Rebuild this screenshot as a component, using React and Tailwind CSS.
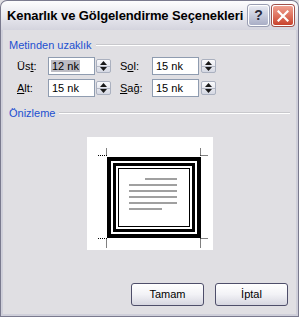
import React from "react";

function Spinner() {
  return (
    <div className="w-[15px] h-[14px] flex flex-col rounded-[2px] border border-[#aab0bf] bg-gradient-to-b from-[#fafafc] to-[#d5d8e3] overflow-hidden">
      <div className="flex-1 flex items-center justify-center border-b border-[#b4b8c4]">
        <svg width="7" height="4" viewBox="0 0 7 4"><path d="M0 4 L3.5 0 L7 4 Z" fill="#1a1a1a" /></svg>
      </div>
      <div className="flex-1 flex items-center justify-center">
        <svg width="7" height="4" viewBox="0 0 7 4"><path d="M0 0 L3.5 4 L7 0 Z" fill="#1a1a1a" /></svg>
      </div>
    </div>
  );
}

function Field({ value, selected }) {
  return (
    <div className="w-[47px] h-[18px] shrink-0 flex items-center border border-[#8f9cb0] bg-white pl-[2px]">
      {selected ? (
        <span className="bg-[#bcbcc4] px-[1px] leading-[12px]">{value}</span>
      ) : (
        <span className="px-[1px] leading-[12px]">{value}</span>
      )}
    </div>
  );
}

function GroupHeader({ children, mt }) {
  return (
    <div className={`flex items-center h-[14px] pl-[6px] pr-[6px] ${mt}`}>
      <span className="text-[#1d4fd0] whitespace-nowrap">{children}</span>
      <div className="flex-1 ml-[4px] h-[2px] border-t border-[#c8c8cc] border-b border-b-white" />
    </div>
  );
}

export default function App() {
  const marks = [
    { x: 20, y: 18.5, hx: -9, vy: -8 },
    { x: 113.5, y: 18.5, hx: 8, vy: -8 },
    { x: 20, y: 101.5, hx: -9, vy: 9 },
    { x: 113.5, y: 101.5, hx: 8, vy: 9 },
  ];
  return (
    <div className="w-[299px] h-[317px] flex flex-col bg-[#e0dfe3] overflow-hidden text-[11px] text-black font-['Liberation_Sans','Noto_Sans',sans-serif]">
      {/* Title bar */}
      <div className="h-[30px] shrink-0 flex items-center pl-[6px] pr-[4px] rounded-t-[7px] border border-b-0 border-[#7a7a8e] bg-gradient-to-b from-[#fdfdfe] via-[#e9e9ef] to-[#d4d4de]">
        <span className="flex-1 min-w-0 overflow-hidden text-[13px] font-bold text-black whitespace-nowrap tracking-[-0.1px]">
          Kenarlık ve Gölgelendirme Seçenekleri
        </span>
        <div className="shrink-0 w-[21px] h-[21px] rounded-[3px] border border-white bg-gradient-to-b from-[#e8eaf2] to-[#a9aec6] shadow-[0_0_0_1px_#9a9eb2] flex items-center justify-center text-[14px] font-bold text-[#2a2a3a]">
          ?
        </div>
        <div className="shrink-0 ml-[3px] w-[22px] h-[21px] rounded-[3px] border border-white bg-gradient-to-b from-[#f0a090] to-[#c8402c] shadow-[0_0_0_1px_#a0504a] flex items-center justify-center">
          <svg width="12" height="12" viewBox="0 0 12 12">
            <path d="M1.5 1.5 L10.5 10.5 M10.5 1.5 L1.5 10.5" stroke="#fff" strokeWidth="2.2" strokeLinecap="square" />
          </svg>
        </div>
      </div>

      {/* Body */}
      <div className="flex-1 flex flex-col border-x border-b border-[#7a7a8e]">
        <div className="flex-1 flex flex-col border-x-2 border-b-2 border-[#cfcfda]">
          <GroupHeader mt="mt-[8px]">Metinden uzaklık</GroupHeader>

          <div className="mt-[5px] flex items-center h-[18px] pl-[14px]">
            <span className="w-[31px] shrink-0">Üs<span className="underline">t</span>:</span>
            <Field value="12 nk" selected />
            <div className="ml-[1px] shrink-0"><Spinner /></div>
            <span className="ml-[9px] w-[32px] shrink-0">S<span className="underline">o</span>l:</span>
            <Field value="15 nk" />
            <div className="ml-[2px] shrink-0"><Spinner /></div>
          </div>
          <div className="mt-[4px] flex items-center h-[18px] pl-[14px]">
            <span className="w-[31px] shrink-0"><span className="underline">A</span>lt:</span>
            <Field value="15 nk" />
            <div className="ml-[1px] shrink-0"><Spinner /></div>
            <span className="ml-[9px] w-[32px] shrink-0"><span className="underline">S</span>ağ:</span>
            <Field value="15 nk" />
            <div className="ml-[2px] shrink-0"><Spinner /></div>
          </div>

          <GroupHeader mt="mt-[9px]">Önizleme</GroupHeader>

          <div className="mt-[17px] mx-auto w-[126px] h-[113px] bg-white">
            <svg width="126" height="113" viewBox="0 0 126 113">
              <rect x="20" y="20" width="94" height="81" fill="#000" />
              <rect x="24" y="24" width="86" height="73" fill="#fff" />
              <rect x="26" y="26" width="82" height="69" fill="#000" />
              <rect x="29" y="29" width="76" height="63" fill="#fff" />
              <rect x="31" y="31" width="72" height="59" fill="#000" />
              <rect x="32" y="32" width="70" height="57" fill="#fff" />
              <rect x="58" y="41" width="32" height="2" fill="#a0a0a0" />
              <rect x="42" y="47" width="48" height="2" fill="#a0a0a0" />
              <rect x="42" y="53" width="48" height="2" fill="#a0a0a0" />
              <rect x="42" y="59" width="48" height="2" fill="#a0a0a0" />
              <rect x="42" y="65" width="48" height="2" fill="#a0a0a0" />
              <rect x="42" y="71" width="33" height="2" fill="#a0a0a0" />
              {marks.map((m, i) => (
                <g key={i} stroke="#000" strokeWidth="1" strokeDasharray="1 1">
                  <line x1={m.x} y1={m.y} x2={m.x + m.hx} y2={m.y} />
                  <line x1={m.x - (m.hx < 0 ? 0.5 : 0)} y1={m.y} x2={m.x - (m.hx < 0 ? 0.5 : 0)} y2={m.y + m.vy} />
                </g>
              ))}
            </svg>
          </div>

          <div className="mt-auto flex justify-end gap-[11px] pr-[8px] pb-[8px]">
            <button className="w-[73px] h-[23px] rounded-[3px] border border-[#4e4e6a] bg-gradient-to-b from-white via-[#f2f2f6] to-[#d6d6e0] text-[11px] text-black">
              Tamam
            </button>
            <button className="w-[73px] h-[23px] rounded-[3px] border border-[#4e4e6a] bg-gradient-to-b from-white via-[#f2f2f6] to-[#d6d6e0] text-[11px] text-black">
              İptal
            </button>
          </div>
        </div>
      </div>
    </div>
  );
}
